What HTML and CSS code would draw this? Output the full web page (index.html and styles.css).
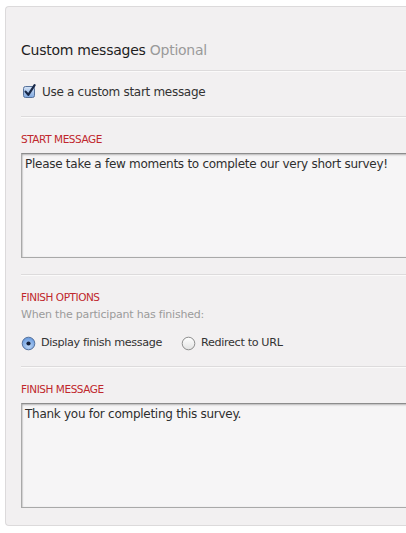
FILE: index.html
```html
<!DOCTYPE html>
<html>
<head>
<meta charset="utf-8">
<link rel="stylesheet" href="styles.css">
</head>
<body>
<div class="panel">
  <div class="header">
    <h2 class="title">Custom messages <span class="optional">Optional</span></h2>
  </div>
  <div class="section check-row">
    <label class="option">
      <svg class="box" width="15" height="15" viewBox="0 0 15 15">
        <defs>
          <linearGradient id="cbg" x1="0" y1="0" x2="0" y2="1">
            <stop offset="0" stop-color="#d6e4f6"/>
            <stop offset="1" stop-color="#7ea7df"/>
          </linearGradient>
        </defs>
        <rect x="1.5" y="2.5" width="11" height="11" rx="2" fill="url(#cbg)" stroke="#56719a"/>
        <path d="M3.6 7.6 L6.3 10.8 L12.6 1.2" fill="none" stroke="#182848" stroke-width="2.2" stroke-linecap="round" stroke-linejoin="round"/>
      </svg>
      <span>Use a custom start message</span>
    </label>
  </div>
  <div class="section field">
    <div class="label">START MESSAGE</div>
    <div class="textbox">Please take a few moments to complete our very short survey!</div>
  </div>
  <div class="section finish-options">
    <div class="label">FINISH OPTIONS</div>
    <div class="help">When the participant has finished:</div>
    <div class="radios">
      <label class="option radio">
        <svg class="box" width="15" height="15" viewBox="0 0 15 15">
          <defs>
            <radialGradient id="rbg" cx="0.5" cy="0.7" r="0.6">
              <stop offset="0" stop-color="#bcd6f6"/>
              <stop offset="1" stop-color="#6f9fe0"/>
            </radialGradient>
          </defs>
          <circle cx="7.5" cy="7.5" r="6.3" fill="url(#rbg)" stroke="#55719c"/>
          <circle cx="7.5" cy="7.5" r="2.1" fill="#14203a"/>
        </svg>
        <span>Display finish message</span>
      </label>
      <label class="option radio">
        <svg class="box" width="15" height="15" viewBox="0 0 15 15">
          <defs>
            <linearGradient id="rbw" x1="0" y1="0" x2="0" y2="1">
              <stop offset="0" stop-color="#ffffff"/>
              <stop offset="1" stop-color="#e2e2e2"/>
            </linearGradient>
          </defs>
          <circle cx="7.5" cy="7.5" r="6.3" fill="url(#rbw)" stroke="#8e8e8e"/>
        </svg>
        <span>Redirect to URL</span>
      </label>
    </div>
  </div>
  <div class="section field last">
    <div class="label">FINISH MESSAGE</div>
    <div class="textbox">Thank you for completing this survey.</div>
  </div>
</div>
</body>
</html>
```
FILE: styles.css
```css
html, body {
  margin: 0;
  padding: 0;
  background: #ffffff;
  overflow: hidden;
}
body {
  font-family: "DejaVu Sans", "Liberation Sans", sans-serif;
  color: #333;
}
.panel {
  margin: 6px 0 0 5px;
  width: 420px;
  height: 518px;
  border: 1px solid #dcdadb;
  border-right: none;
  border-radius: 4px 0 0 4px;
  background: #f2f0f1;
  padding-left: 15px;
  box-sizing: content-box;
}
.header {
  padding-top: 33px;
  height: 30px;
}
.title {
  margin: 0;
  font-size: 14px;
  font-weight: normal;
  line-height: 20px;
  letter-spacing: -0.25px;
  color: #1e1e1e;
}
.optional {
  color: #9a9a9a;
}
.section {
  border-top: 1px solid #dddbdc;
  box-shadow: inset 0 1px 0 #fbfafa;
}
.check-row {
  padding: 13px 0 18px;
  height: 14px;
}
.option {
  display: inline-flex;
  align-items: center;
  gap: 5px;
  font-size: 12px;
  line-height: 14px;
  letter-spacing: -0.3px;
  color: #333;
}
.option.radio {
  font-size: 11.2px;
  letter-spacing: -0.35px;
}
.check-row .option {
  margin-left: 1px;
}
.box {
  flex: none;
  display: block;
}
.field {
  padding-top: 15px;
  height: 142px;
}
.label {
  font-size: 10.5px;
  line-height: 14px;
  color: #c0272d;
  letter-spacing: -0.45px;
}
.textbox {
  margin-top: 7px;
  width: 400px;
  height: 105px;
  box-sizing: border-box;
  border: 1px solid #a9a9a9;
  border-top-color: #8c8c8c;
  background: #f6f5f6;
  box-shadow: inset 0 1px 2px rgba(0,0,0,0.25), inset 1px 0 1px rgba(0,0,0,0.08);
  padding: 2px 3px;
  font-size: 12px;
  line-height: 16px;
  letter-spacing: -0.27px;
  color: #2e2e2e;
}
.finish-options {
  padding-top: 15px;
  height: 76px;
}
.help {
  margin-top: 3px;
  font-size: 11px;
  line-height: 16px;
  letter-spacing: -0.2px;
  color: #9b9b9b;
}
.radios {
  margin-top: 12px;
  display: flex;
  gap: 19px;
  height: 16px;
  align-items: center;
}
```
